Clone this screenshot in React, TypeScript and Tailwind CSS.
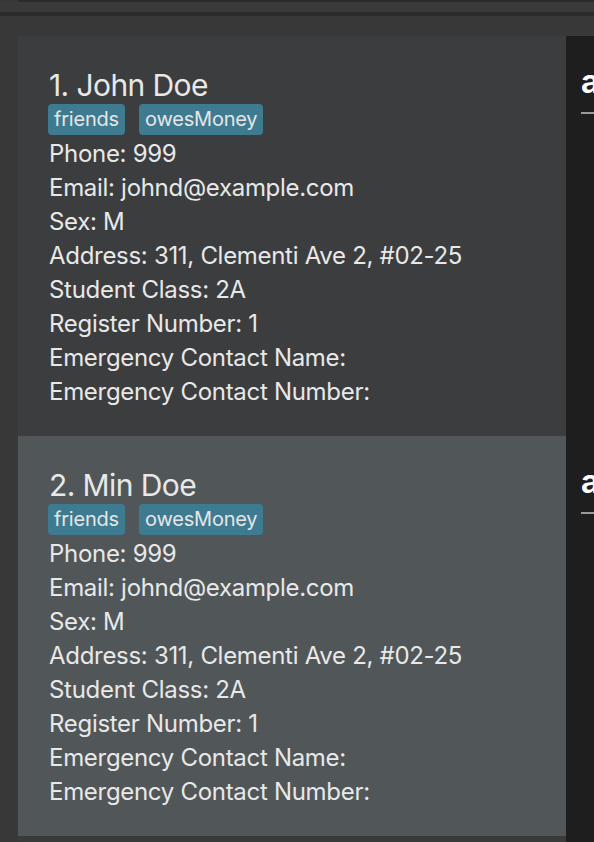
const people = [
  { id: 1, name: 'John Doe', bg: 'bg-[#3c3d3f]' },
  { id: 2, name: 'Min Doe', bg: 'bg-[#515658]' },
]

const TAGS = ['friends', 'owesMoney']

function PersonCard({ id, name, bg }: { id: number; name: string; bg: string }) {
  const fields = [
    'Phone: 999',
    'Email: johnd@example.com',
    'Sex: M',
    'Address: 311, Clementi Ave 2, #02-25',
    'Student Class: 2A',
    'Register Number: 1',
    'Emergency Contact Name:',
    'Emergency Contact Number:',
  ]
  return (
    <div className={`h-[400px] pl-[31px] pt-[31px] ${bg}`}>
      <div className="text-[30px] leading-[36px] tracking-[-0.6px] text-[#e8e8e8]">
        {id}. {name}
      </div>
      <div className="-ml-px mt-px flex gap-[14px]">
        {TAGS.map((t) => (
          <span
            key={t}
            className="h-[31px] rounded-[4px] bg-[#3e7b91] px-[6px] text-[20px] leading-[31px] tracking-[-0.2px] text-[#e6e6e6]"
          >
            {t}
          </span>
        ))}
      </div>
      <div className="mt-[2px] text-[24px] leading-[34px] tracking-[-0.3px] text-[#e8e8e8]">
        {fields.map((f) => (
          <div key={f}>{f}</div>
        ))}
      </div>
    </div>
  )
}

function SideItem() {
  return (
    <div className="h-[400px] overflow-hidden pl-[15px] pt-[28px]">
      <div className="text-[32px] font-bold leading-[36px] text-white">a</div>
      <div className="mt-[12px] h-[2px] w-full bg-[#9a9a9a]" />
    </div>
  )
}

export default function App() {
  return (
    <div
      className="h-[842px] w-[594px] overflow-hidden bg-[#383838]"
      style={{ fontFamily: 'Inter, "Noto Sans", sans-serif' }}
    >
      <div className="flex h-[2px]">
        <div className="w-[18px] bg-[#383838]" />
        <div className="flex-1 bg-[#2b2b2b]" />
      </div>
      <div className="h-[10px] bg-[#3a3a3a]" />
      <div className="h-[4px] bg-[#2b2b2b]" />
      <div className="h-[20px] bg-[#383838]" />
      <div className="flex">
        <div className="w-[18px] shrink-0" />
        <div className="w-[548px] shrink-0">
          {people.map((p) => (
            <PersonCard key={p.id} {...p} />
          ))}
          <div className="h-[6px] bg-[#3a3a3a]" />
        </div>
        <div className="flex-1 overflow-hidden bg-[#1e1e1e]">
          <SideItem />
          <SideItem />
        </div>
      </div>
    </div>
  )
}
